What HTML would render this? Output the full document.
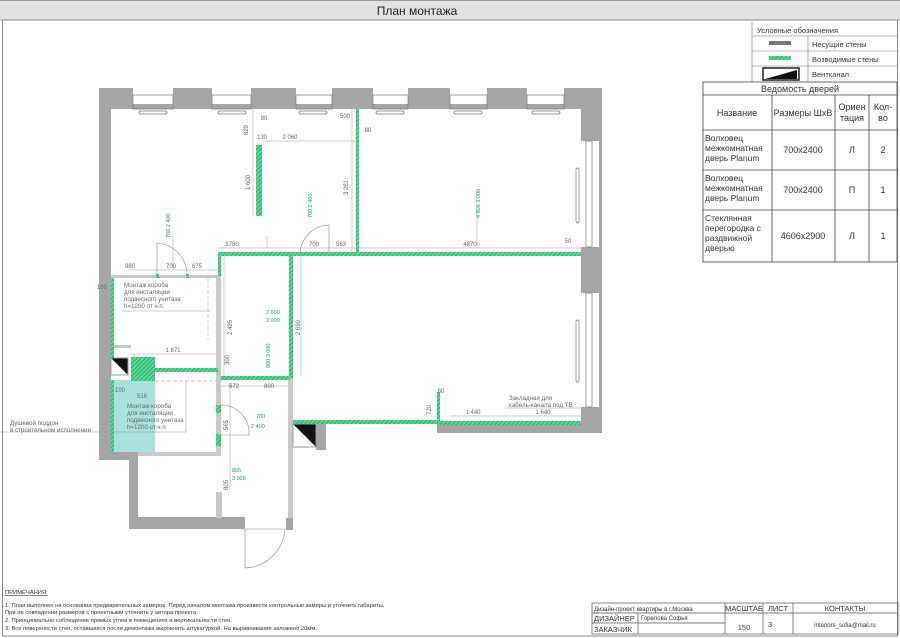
<!DOCTYPE html>
<html><head><meta charset="utf-8"><style>
html,body{margin:0;padding:0;background:#fff;width:900px;height:638px;overflow:hidden}
svg{display:block;font-family:"Liberation Sans","DejaVu Sans",sans-serif}
</style></head><body>
<svg width="900" height="638" viewBox="0 0 900 638" xmlns="http://www.w3.org/2000/svg">
<defs>
<pattern id="h" width="3" height="3" patternUnits="userSpaceOnUse" patternTransform="rotate(45)">
<rect width="3" height="3" fill="#2fc27a"/><rect width="1" height="3" fill="#7fdca8"/></pattern>
</defs>
<rect x="0" y="0" width="900" height="638" fill="#fff"/>
<rect x="0" y="0" width="900" height="20" fill="#e4e2e0"/>
<line x1="0" y1="0.5" x2="900" y2="0.5" stroke="#999"/>
<line x1="0" y1="20" x2="900" y2="20" stroke="#aaa"/>
<rect x="2.5" y="20" width="895" height="616" fill="none" stroke="#888" stroke-width="1"/>
<text x="417" y="15" font-size="12" text-anchor="middle" fill="#222">План монтажа</text>

<!-- walls grey -->
<g fill="#a6a6a6">
<rect x="99" y="88" width="503" height="21"/>
<rect x="99" y="88" width="12" height="372"/>
<rect x="581" y="88" width="21" height="345"/>
<rect x="437" y="424" width="165" height="9"/>
<rect x="99" y="452" width="39" height="8"/>
<rect x="129" y="452" width="9" height="77"/>
<rect x="129" y="517" width="116" height="12"/>
<rect x="286" y="518" width="7" height="12"/>
<rect x="316" y="424" width="10" height="26"/>
</g>
<g fill="#fff">
<rect x="133" y="88" width="40" height="16"/><rect x="212" y="88" width="39" height="16"/>
<rect x="296" y="88" width="36" height="16"/><rect x="373" y="88" width="35" height="16"/>
<rect x="450" y="88" width="37" height="16"/><rect x="527" y="88" width="37" height="16"/>
<rect x="581" y="141" width="18" height="106"/><rect x="581" y="293" width="18" height="114"/>
</g>
<g fill="none" stroke="#777" stroke-width="0.7">
<rect x="133" y="95" width="40" height="14"/><rect x="212" y="95" width="39" height="14"/>
<rect x="296" y="95" width="36" height="14"/><rect x="373" y="95" width="35" height="14"/>
<rect x="450" y="95" width="37" height="14"/><rect x="527" y="95" width="37" height="14"/>
<rect x="139" y="111" width="28" height="3" rx="1.5"/><rect x="218" y="111" width="28" height="3" rx="1.5"/>
<rect x="299" y="111" width="28" height="3" rx="1.5"/><rect x="376" y="111" width="28" height="3" rx="1.5"/>
<rect x="454" y="111" width="28" height="3" rx="1.5"/><rect x="532" y="111" width="28" height="3" rx="1.5"/>
<rect x="576" y="168" width="3" height="55" rx="1.5"/><rect x="576" y="320" width="3" height="62" rx="1.5"/>
<rect x="586" y="141" width="6" height="106"/><rect x="586" y="293" width="6" height="114"/>
</g>
<!-- light grey partitions -->
<g fill="#c8c8c8">
<rect x="111" y="275" width="107" height="3"/>
<rect x="216" y="275" width="5" height="180"/>
<rect x="138" y="452" width="83" height="4"/>
<rect x="111" y="345" width="20" height="3"/>
<rect x="216" y="492" width="6" height="26"/>
<rect x="288" y="378" width="5" height="140"/>
<rect x="221" y="378" width="3" height="0"/>
</g>
<rect x="111" y="380" width="44" height="72" fill="#a8e2da"/>
<!-- green walls -->
<g fill="url(#h)">
<rect x="218" y="252" width="363" height="4"/>
<rect x="356" y="109" width="3" height="146"/>
<rect x="256" y="145" width="6" height="71"/>
<rect x="218" y="252" width="3" height="24"/>
<rect x="289" y="254" width="4" height="124"/>
<rect x="221" y="376" width="69" height="4"/>
<rect x="155" y="368" width="63" height="4"/>
<rect x="131" y="357" width="24" height="24"/>
<rect x="111" y="278" width="3" height="80"/>
<rect x="111" y="380" width="3" height="72"/>
<rect x="293" y="420" width="144" height="4"/>
<rect x="437" y="392" width="3" height="32"/>
<rect x="440" y="421" width="141" height="4"/>
<rect x="156" y="274" width="3" height="4"/><rect x="186" y="274" width="3" height="4"/>
<rect x="216" y="405" width="5" height="8"/><rect x="216" y="434" width="5" height="12"/>
</g>
<!-- vents -->
<path d="M111 358 H128 V375 Z" fill="#111"/><rect x="111" y="358" width="17" height="17" fill="none" stroke="#999"/>
<path d="M293 424 H316 V447 Z" fill="#111"/><rect x="293" y="424" width="23" height="23" fill="none" stroke="#999"/>
<!-- doors -->
<g fill="none" stroke="#888" stroke-width="0.6">
<path d="M157 278 V243 A32 32 0 0 1 187 276"/>
<path d="M300 253 A30 30 0 0 1 329 225 V253"/>
<path d="M221 405 A28 28 0 0 1 249 435 H221"/>
<path d="M245 529 V568 A42 42 0 0 0 285 530"/>
<line x1="245" y1="529" x2="286" y2="529"/>
</g>
<!-- dimensions -->
<g stroke="#999" stroke-width="0.5" fill="none">
<line x1="128" y1="270" x2="218" y2="270"/><line x1="218" y1="248" x2="356" y2="248"/>
<line x1="359" y1="248" x2="581" y2="248"/><line x1="262" y1="141" x2="356" y2="141"/>
<line x1="253" y1="109" x2="253" y2="216"/><line x1="352" y1="109" x2="352" y2="252"/>
<line x1="131" y1="354" x2="216" y2="354"/><line x1="224" y1="256" x2="224" y2="376"/>
<line x1="301" y1="256" x2="301" y2="376"/><line x1="221" y1="386" x2="288" y2="386"/>
<line x1="450" y1="416" x2="505" y2="416"/><line x1="505" y1="416" x2="581" y2="416"/>
<line x1="230" y1="383" x2="230" y2="490"/><line x1="0" y1="432" x2="122" y2="432"/>
<line x1="122" y1="311" x2="210" y2="311"/><line x1="208" y1="278" x2="208" y2="340" stroke-dasharray="4 2"/>
<line x1="155" y1="381" x2="218" y2="381" stroke-dasharray="4 2"/><line x1="186" y1="381" x2="186" y2="432"/>
<line x1="122" y1="432" x2="186" y2="432"/><line x1="505" y1="408" x2="581" y2="408"/>
<line x1="267" y1="236" x2="267" y2="248"/><line x1="173" y1="235" x2="173" y2="270"/>
<line x1="477" y1="210" x2="477" y2="248"/>
</g>
<g font-size="6" fill="#666" text-anchor="middle">
<text x="130" y="268">980</text><text x="171" y="268">700</text><text x="197" y="268">675</text>
<text x="232" y="246">1780</text><text x="314" y="246">700</text><text x="341" y="246">563</text>
<text x="470" y="246">4870</text><text x="568" y="243">50</text><text x="290" y="139">2 060</text>
<text x="264" y="120">90</text><text x="345" y="118">500</text><text x="368" y="132">80</text>
<text x="262" y="139">130</text><text x="173" y="352">1 871</text><text x="234" y="388">672</text>
<text x="269" y="388">800</text><text x="473" y="414">1 440</text><text x="543" y="414">1 640</text>
<text x="120" y="392">100</text><text x="142" y="398">516</text><text x="102" y="289">100</text>
<text x="441" y="393">80</text>
</g>
<g font-size="6" fill="#666">
<text transform="translate(250,190) rotate(-90)">1 600</text>
<text transform="translate(348,195) rotate(-90)">3 261</text>
<text transform="translate(232,335) rotate(-90)">2 425</text>
<text transform="translate(300,335) rotate(-90)">2 690</text>
<text transform="translate(248,135) rotate(-90)">829</text>
<text transform="translate(431,415) rotate(-90)">720</text>
<text transform="translate(229,365) rotate(-90)">300</text>
<text transform="translate(228,430) rotate(-90)">565</text>
<text transform="translate(228,490) rotate(-90)">805</text>
</g>
<g font-size="5.5" fill="#2a9a5a">
<text transform="translate(170,238) rotate(-90)">700 2 400</text>
<text transform="translate(312,218) rotate(-90)">700 2 400</text>
<text transform="translate(480,218) rotate(-90)">4 606 3 000</text>
<text x="266" y="314">2 690</text><text x="266" y="322">3 000</text>
<text transform="translate(270,368) rotate(-90)">800 3 000</text>
<text x="256" y="418">700</text><text x="251" y="428">2 400</text>
<text x="232" y="472">805</text><text x="232" y="480">3 000</text>
</g>
<g font-size="6.2" fill="#666">
<text x="124" y="287">Монтаж короба</text><text x="124" y="294">для инсталяции</text>
<text x="124" y="301">подвесного унитаза</text><text x="124" y="308">h=1200 от ч.п.</text>
<text x="127" y="408">Монтаж короба</text><text x="127" y="415">для инсталяции</text>
<text x="127" y="422">подвесного унитаза</text><text x="127" y="429">h=1200 от ч.п.</text>
<text x="10" y="425">Душевой поддон</text><text x="10" y="432">в строительном исполнении</text>
<text x="509" y="400">Закладная для</text><text x="509" y="407">кабель-канала под ТВ</text>
</g>

<!-- legend -->
<g stroke="#777" stroke-width="0.6" fill="none">
<line x1="752" y1="22" x2="752" y2="82"/><line x1="752" y1="36" x2="897" y2="36"/>
<line x1="752" y1="51" x2="897" y2="51"/><line x1="752" y1="66" x2="897" y2="66"/>
<line x1="808" y1="36" x2="808" y2="82"/>
</g>
<rect x="769" y="41" width="22" height="4" fill="#777"/>
<rect x="769" y="56" width="22" height="4" fill="url(#h)"/>
<rect x="763" y="68" width="36" height="12" fill="#fff" stroke="#222" stroke-width="1.5"/>
<path d="M765 79 L797 70 V79 Z" fill="#111"/>
<g font-size="7.5" fill="#333">
<text x="757" y="33">Условные обозначения</text><text x="812" y="47">Несущие стены</text>
<text x="812" y="62">Возводимые стены</text><text x="812" y="77">Вентканал</text>
</g>
<!-- table -->
<g stroke="#444" stroke-width="0.8" fill="none">
<rect x="703" y="82" width="194" height="180"/>
<line x1="703" y1="95" x2="897" y2="95"/><line x1="703" y1="130" x2="897" y2="130"/>
<line x1="703" y1="170" x2="897" y2="170"/><line x1="703" y1="210" x2="897" y2="210"/>
<line x1="772" y1="95" x2="772" y2="262"/><line x1="835" y1="95" x2="835" y2="262"/>
<line x1="869" y1="95" x2="869" y2="262"/>
</g>
<g font-size="9" fill="#333" text-anchor="middle">
<text x="800" y="92">Ведомость дверей</text>
<text x="737" y="116">Название</text><text x="803" y="116">Размеры ШхВ</text>
<text x="852" y="110">Ориен</text><text x="852" y="121">тация</text>
<text x="883" y="110">Кол-</text><text x="883" y="121">во</text>
<text x="803" y="153">700x2400</text><text x="852" y="153">Л</text><text x="883" y="153">2</text>
<text x="803" y="193">700x2400</text><text x="852" y="193">П</text><text x="883" y="193">1</text>
<text x="803" y="239">4606x2900</text><text x="852" y="239">Л</text><text x="883" y="239">1</text>
</g>
<g font-size="8.5" fill="#333">
<text x="705" y="141">Волховец</text><text x="705" y="151">межкомнатная</text><text x="705" y="161">дверь Planum</text>
<text x="705" y="181">Волховец</text><text x="705" y="191">межкомнатная</text><text x="705" y="201">дверь Planum</text>
<text x="705" y="221">Стеклянная</text><text x="705" y="231">перегородка с</text><text x="705" y="241">раздвижной</text><text x="705" y="251">дверью</text>
</g>

<!-- notes -->
<g font-size="5.8" fill="#333">
<text x="5" y="594" text-decoration="underline">ПРИМЕЧАНИЯ:</text>
<text x="5" y="607">1. План выполнен на основании предварительных замеров. Перед началом монтажа произвести контрольные замеры и уточнить габариты.</text>
<text x="5" y="614">При не совпадении размеров с проектными уточнить у автора проекта.</text>
<text x="5" y="622">2. Принципиально соблюдение прямых углов в помещениях и вертикальности стен.</text>
<text x="5" y="630">3. Все поверхности стен, оставшихся после демонтажа выровнять штукатуркой. На выравнивание заложено 20мм.</text>
</g>
<!-- stamp -->
<g stroke="#555" stroke-width="0.7" fill="none">
<rect x="592" y="603" width="306" height="31"/>
<line x1="592" y1="613" x2="725" y2="613"/><line x1="592" y1="623" x2="725" y2="623"/>
<line x1="725" y1="613" x2="898" y2="613"/>
<line x1="638" y1="613" x2="638" y2="634"/><line x1="725" y1="603" x2="725" y2="634"/>
<line x1="763" y1="603" x2="763" y2="634"/><line x1="793" y1="603" x2="793" y2="634"/>
</g>
<g fill="#333">
<text x="594" y="611" font-size="6">Дизайн-проект квартиры в г.Москва</text>
<text x="594" y="621" font-size="7.5">ДИЗАЙНЕР</text><text x="594" y="632" font-size="7.5">ЗАКАЗЧИК</text>
<text x="641" y="620" font-size="6">Горелова Софья</text>
<text x="744" y="611" font-size="7.5" text-anchor="middle">МАСШТАБ</text>
<text x="778" y="611" font-size="7.5" text-anchor="middle">ЛИСТ</text>
<text x="845" y="611" font-size="7.5" text-anchor="middle">КОНТАКТЫ</text>
<text x="744" y="630" font-size="7.5" text-anchor="middle">150</text>
<text x="768" y="627" font-size="7.5">3</text>
<text x="845" y="627" font-size="6" text-anchor="middle">interiors_sofia@mail.ru</text>
</g>
</svg>
</body></html>
